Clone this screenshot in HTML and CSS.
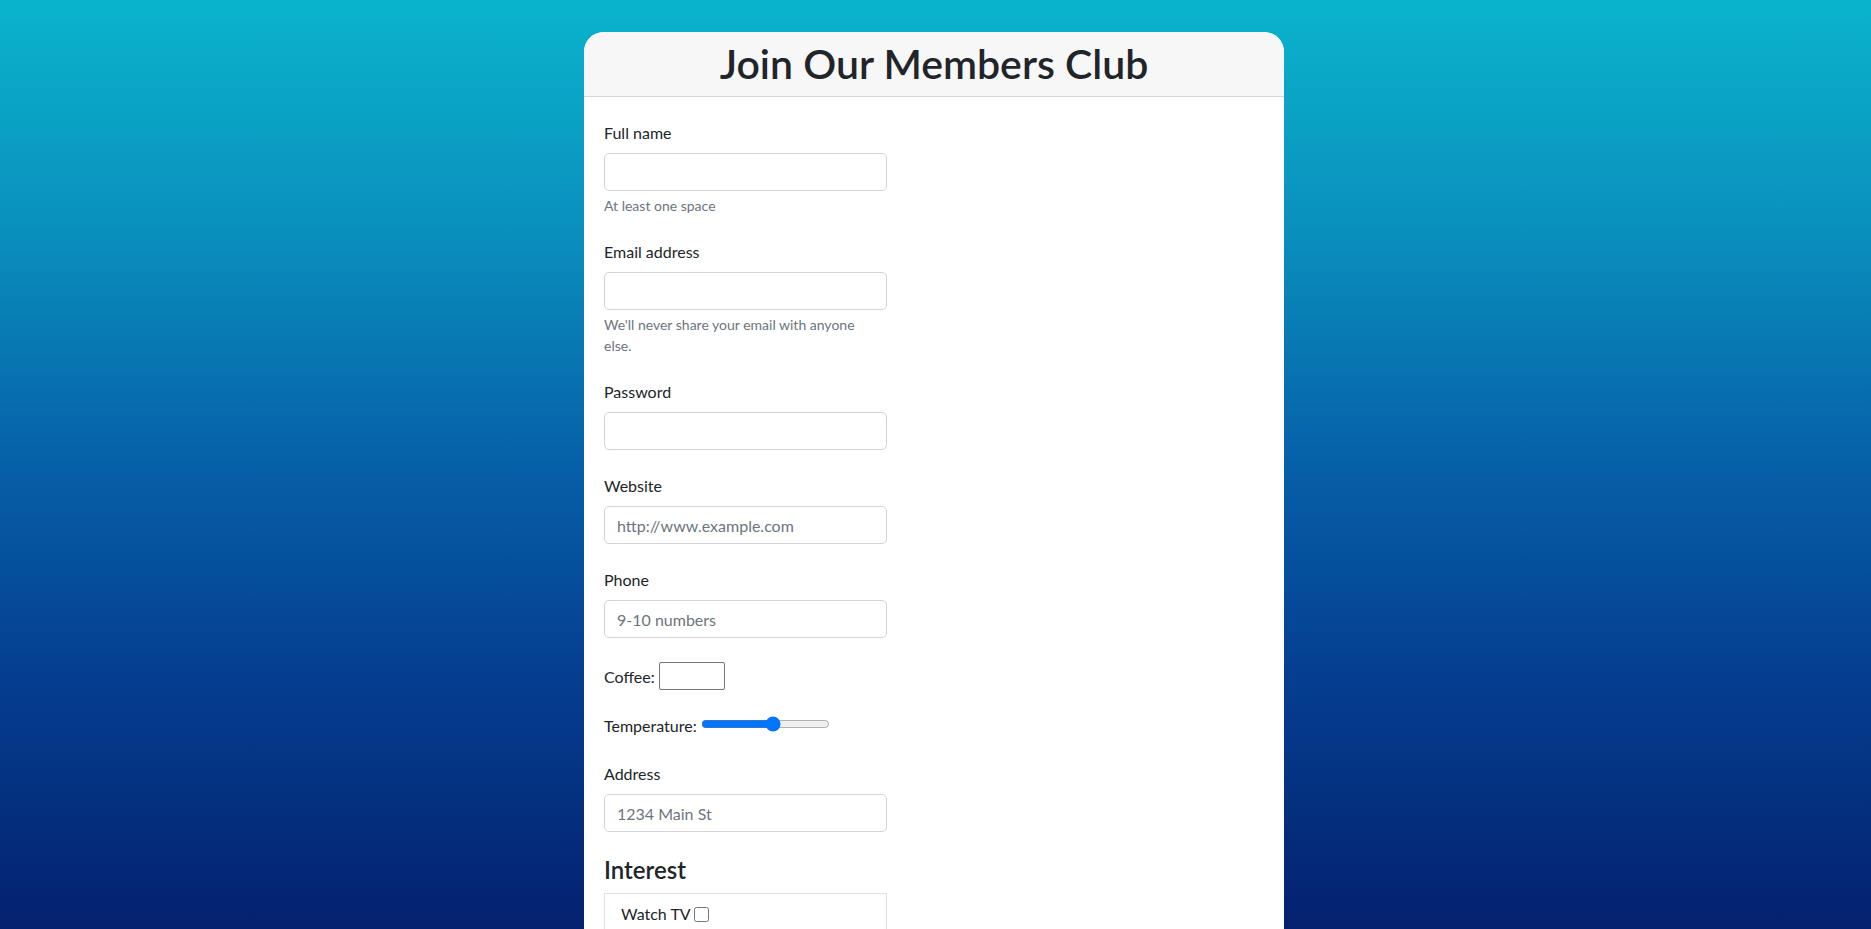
FILE: index.html
```html
<!DOCTYPE html>
<html lang="en">
<head>
<meta charset="utf-8">
<title>Join Our Members Club</title>
<link rel="stylesheet" href="styles.css">
</head>
<body>
<div class="page">
  <div class="card">
    <div class="card-header">
      <h1 class="title">Join Our Members Club</h1>
    </div>
    <div class="card-body">
      <form class="form">
        <div class="group">
          <label class="label" for="fullname">Full name</label>
          <input class="control" id="fullname" type="text">
          <div class="help">At least one space</div>
        </div>
        <div class="group">
          <label class="label" for="email">Email address</label>
          <input class="control" id="email" type="email">
          <div class="help">We'll never share your email with anyone else.</div>
        </div>
        <div class="group">
          <label class="label" for="password">Password</label>
          <input class="control" id="password" type="password">
        </div>
        <div class="group">
          <label class="label" for="website">Website</label>
          <input class="control" id="website" type="url" placeholder="http://www.example.com">
        </div>
        <div class="group">
          <label class="label" for="phone">Phone</label>
          <input class="control" id="phone" type="tel" placeholder="9-10 numbers">
        </div>
        <div class="group inline">
          <label class="inline-label" for="coffee">Coffee:</label>
          <input class="plain" id="coffee" type="text">
        </div>
        <div class="group inline">
          <label class="inline-label" for="temp">Temperature:</label>
          <input class="range" id="temp" type="range" min="0" max="100" step="any" value="56.5">
        </div>
        <div class="group">
          <label class="label" for="address">Address</label>
          <input class="control" id="address" type="text" placeholder="1234 Main St">
        </div>
        <h4 class="section-title">Interest</h4>
        <div class="interest-box">
          <label class="check">Watch TV<input type="checkbox"></label>
        </div>
      </form>
    </div>
  </div>
</div>
</body>
</html>
```

FILE: styles.css
```css
html, body {
  margin: 0;
  padding: 0;
}

body {
  font-family: Lato, "Noto Sans", sans-serif;
  font-size: 16px;
  line-height: 1.5;
  color: #212529;
  background: linear-gradient(to bottom, #0ab4cc 0%, #0a8fbd 25%, #0660a8 50%, #053f91 72%, #04216f 100%);
  background-attachment: fixed;
  min-height: 100vh;
  overflow: hidden;
}

.page {
  display: flex;
  justify-content: center;
  padding-top: 32px;
  padding-right: 3px;
}

.card {
  width: 700px;
  background: #ffffff;
  border-radius: 20px;
  overflow: hidden;
}

.card-header {
  background: #f7f7f7;
  border-bottom: 1px solid #d6d6d6;
  padding: 8px 16px;
}

.title {
  margin: 0;
  font-size: 41px;
  font-weight: 600;
  line-height: 48px;
  text-align: center;
  color: #212529;
}

.card-body {
  padding: 24px 20px 40px;
}

.form {
  width: 283px;
}

.group {
  margin-bottom: 24px;
}

.label {
  display: inline-block;
  margin-bottom: 8px;
}

.control {
  display: block;
  box-sizing: border-box;
  width: 100%;
  height: 38px;
  padding: 6px 12px;
  font-family: inherit;
  font-size: 16px;
  line-height: 24px;
  color: #212529;
  background: #fff;
  border: 1px solid #ced4da;
  border-radius: 5px;
  margin: 0;
}

.control::placeholder {
  color: #6c757d;
}

.help {
  margin-top: 4px;
  max-width: 265px;
  font-size: 14px;
  line-height: 21px;
  color: #6c757d;
}

.inline {
  line-height: 24px;
}

.plain {
  box-sizing: border-box;
  width: 66px;
  height: 28px;
  margin: 0;
  padding: 1px 2px;
  font-family: inherit;
  font-size: 16px;
  line-height: 24px;
  border: 1px solid #767676;
  border-radius: 2px;
  vertical-align: baseline;
}

.range {
  width: 129px;
  margin: 2px 2px 2px 0;
  vertical-align: baseline;
  accent-color: #0075ff;
}

.section-title {
  margin: 0 0 8px;
  font-size: 24px;
  font-weight: 600;
  line-height: 1.2;
}

.interest-box {
  border: 1px solid #dee2e6;
  padding: 8px 16px 60px;
}

.check {
  display: block;
  line-height: 24px;
}

.check input {
  width: 15px;
  height: 15px;
  margin: 0 0 0 3px;
  vertical-align: -2px;
}
```
